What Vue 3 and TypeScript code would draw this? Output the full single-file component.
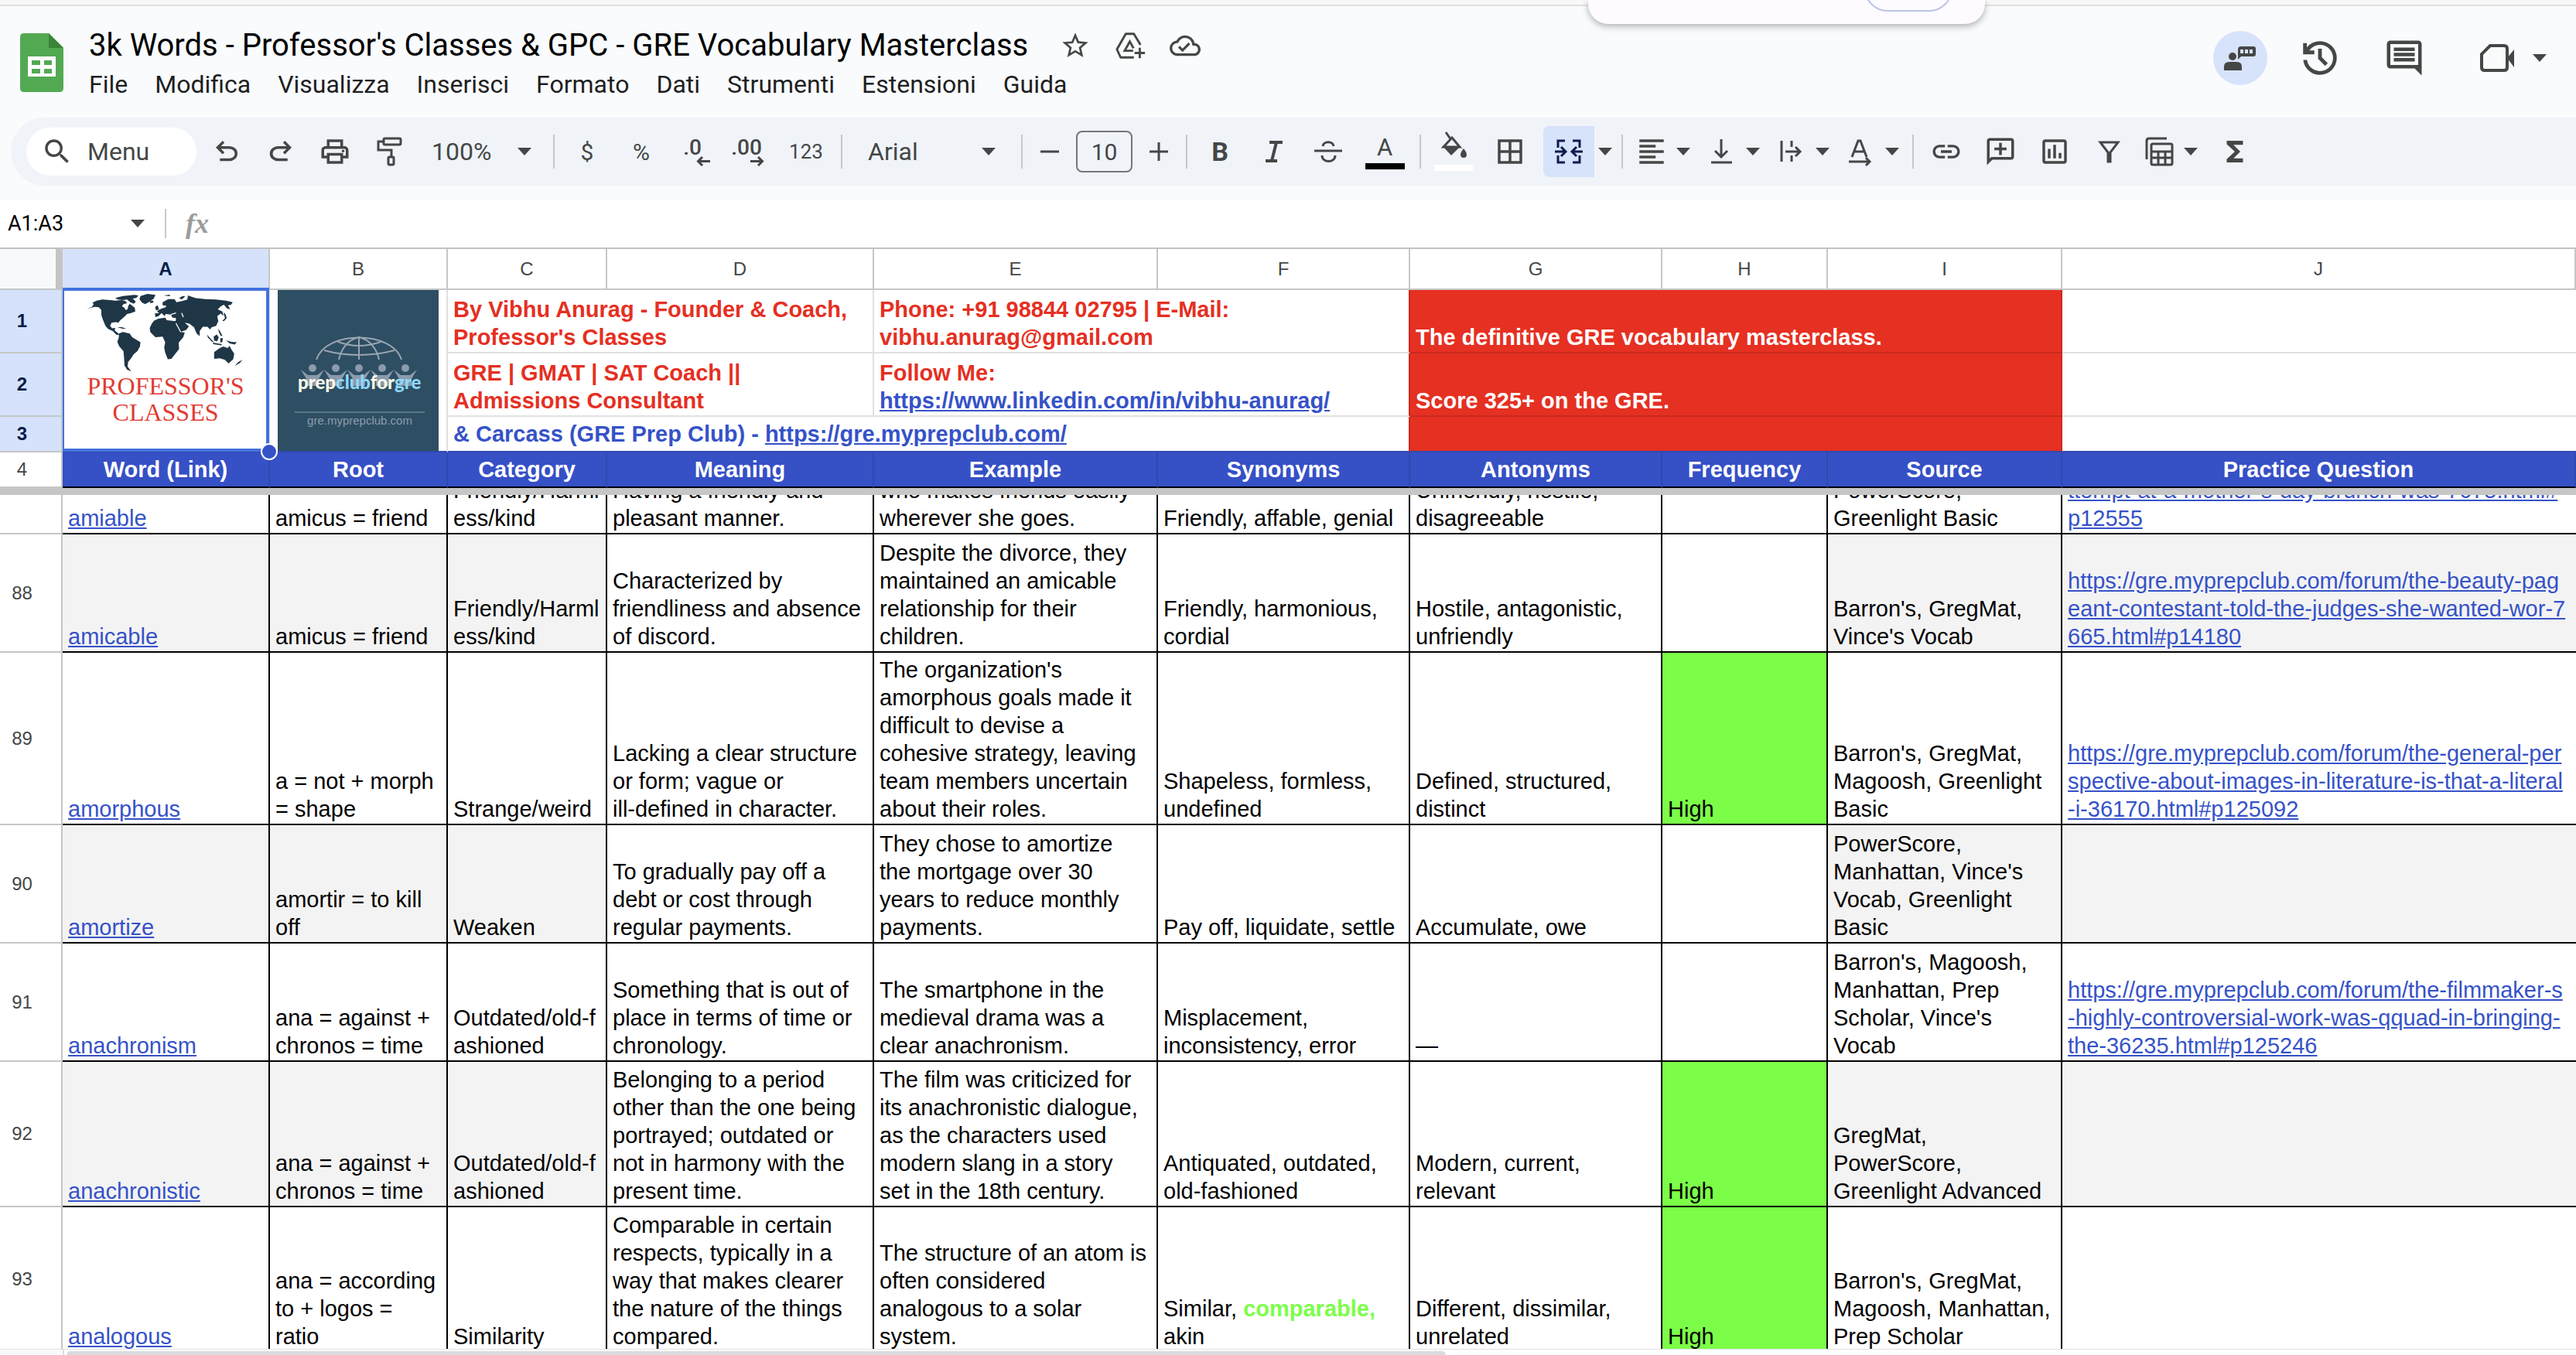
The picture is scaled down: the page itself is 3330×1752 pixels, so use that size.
<script setup lang="ts">
import { ref } from 'vue'

type Part = { text: string; href?: string; hit?: boolean }
type Row = { n: string; height: number; high: boolean; cells: Part[][] }

const menus = ['File', 'Modifica', 'Visualizza', 'Inserisci', 'Formato', 'Dati', 'Strumenti', 'Estensioni', 'Guida']
const letters = ['A', 'B', 'C', 'D', 'E', 'F', 'G', 'H', 'I', 'J']
const titles = ['Word (Link)', 'Root', 'Category', 'Meaning', 'Example', 'Synonyms', 'Antonyms', 'Frequency', 'Source', 'Practice Question']
const shadedColumns = [0, 1, 2, 8, 9]

const zoom = ref('100%')
const font = ref('Arial')
const size = ref('10')
const range = ref('A1:A3')
const formula = ref('')
const query = ref('')

const forum = 'https://gre.myprepclub.com/forum/'

function row(n: string, height: number, word: string, texts: string[], frequency: string, source: string, question: string, hit = ''): Row {
  const plain = texts.map((text): Part[] => {
    if (!hit || !text.includes(hit)) return [{ text }]
    const [before, after] = text.split(hit)
    return [{ text: before }, { text: hit, hit: true }, { text: after }]
  })
  return {
    n,
    height,
    high: frequency !== '',
    cells: [
      [{ text: word, href: '#' + word }],
      ...plain,
      [{ text: frequency }],
      [{ text: source }],
      question ? [{ text: question, href: forum }] : [],
    ],
  }
}

const rows: Row[] = [
  row('', 51, 'amiable', ['amicus = friend', 'Friendly/Harml\ness/kind', 'Having a friendly and\npleasant manner.', 'who makes friends easily\nwherever she goes.', 'Friendly, affable, genial', 'Unfriendly, hostile,\ndisagreeable'], '', 'PowerScore,\nGreenlight Basic', 'ttempt-at-a-mother-s-day-brunch-was-7675.html#\np12555'),
  row('88', 153, 'amicable', ['amicus = friend', 'Friendly/Harml\ness/kind', 'Characterized by\nfriendliness and absence\nof discord.', 'Despite the divorce, they\nmaintained an amicable\nrelationship for their\nchildren.', 'Friendly, harmonious,\ncordial', 'Hostile, antagonistic,\nunfriendly'], '', "Barron's, GregMat,\nVince's Vocab", 'https://gre.myprepclub.com/forum/the-beauty-pag\neant-contestant-told-the-judges-she-wanted-wor-7\n665.html#p14180'),
  row('89', 223, 'amorphous', ['a = not + morph\n= shape', 'Strange/weird', 'Lacking a clear structure\nor form; vague or\nill-defined in character.', "The organization's\namorphous goals made it\ndifficult to devise a\ncohesive strategy, leaving\nteam members uncertain\nabout their roles.", 'Shapeless, formless,\nundefined', 'Defined, structured,\ndistinct'], 'High', "Barron's, GregMat,\nMagoosh, Greenlight\nBasic", 'https://gre.myprepclub.com/forum/the-general-per\nspective-about-images-in-literature-is-that-a-literal\n-i-36170.html#p125092'),
  row('90', 153, 'amortize', ['amortir = to kill\noff', 'Weaken', 'To gradually pay off a\ndebt or cost through\nregular payments.', 'They chose to amortize\nthe mortgage over 30\nyears to reduce monthly\npayments.', 'Pay off, liquidate, settle', 'Accumulate, owe'], '', "PowerScore,\nManhattan, Vince's\nVocab, Greenlight\nBasic", ''),
  row('91', 153, 'anachronism', ['ana = against +\nchronos = time', 'Outdated/old-f\nashioned', 'Something that is out of\nplace in terms of time or\nchronology.', 'The smartphone in the\nmedieval drama was a\nclear anachronism.', 'Misplacement,\ninconsistency, error', '—'], '', "Barron's, Magoosh,\nManhattan, Prep\nScholar, Vince's\nVocab", 'https://gre.myprepclub.com/forum/the-filmmaker-s\n-highly-controversial-work-was-qquad-in-bringing-\nthe-36235.html#p125246'),
  row('92', 188, 'anachronistic', ['ana = against +\nchronos = time', 'Outdated/old-f\nashioned', 'Belonging to a period\nother than the one being\nportrayed; outdated or\nnot in harmony with the\npresent time.', 'The film was criticized for\nits anachronistic dialogue,\nas the characters used\nmodern slang in a story\nset in the 18th century.', 'Antiquated, outdated,\nold-fashioned', 'Modern, current,\nrelevant'], 'High', 'GregMat,\nPowerScore,\nGreenlight Advanced', ''),
  row('93', 188, 'analogous', ['ana = according\nto + logos =\nratio', 'Similarity', 'Comparable in certain\nrespects, typically in a\nway that makes clearer\nthe nature of the things\ncompared.', 'The structure of an atom is\noften considered\nanalogous to a solar\nsystem.', 'Similar, comparable,\nakin', 'Different, dissimilar,\nunrelated'], 'High', "Barron's, GregMat,\nMagoosh, Manhattan,\nPrep Scholar", '', 'comparable,'),
]
</script>

<template>
  <div class="app">
    <svg class="defs" aria-hidden="true">
      <symbol id="search" viewBox="0 0 24 24"><path d="M15.5 14h-.79l-.28-.27A6.471 6.471 0 0 0 16 9.5 6.5 6.5 0 1 0 9.5 16c1.61 0 3.09-.59 4.23-1.57l.27.28v.79l5 4.99L20.49 19l-4.99-5zm-6 0C7.01 14 5 11.99 5 9.5S7.01 5 9.5 5 14 7.01 14 9.5 11.99 14 9.5 14z" /></symbol>
      <symbol id="undo" viewBox="0 -960 960 960"><path d="M280-200v-80h284q63 0 109.5-40T720-420q0-60-46.5-100T564-560H312l104 104-56 56-200-200 200-200 56 56-104 104h252q97 0 169.5 63T800-420q0 94-72.5 157T564-200H280Z" /></symbol>
      <symbol id="redo" viewBox="0 -960 960 960"><path d="M396-200q-97 0-169.5-63T154-420q0-94 72.5-157T396-640h252L544-744l56-56 200 200-200 200-56-56 104-104H396q-63 0-109.5 40T240-420q0 60 46.5 100T396-280h284v80H396Z" /></symbol>
      <symbol id="print" viewBox="0 0 24 24"><path d="M19 8h-1V3H6v5H5c-1.66 0-3 1.34-3 3v6h4v4h12v-4h4v-6c0-1.66-1.34-3-3-3zM8 5h8v3H8V5zm8 14H8v-4h8v4zm2-4v-2H6v2H4v-4c0-.55.45-1 1-1h14c.55 0 1 .45 1 1v4h-2z" /><circle cx="18" cy="11.5" r="1" /></symbol>
      <symbol id="paint" viewBox="0 0 42 42"><g class="stroke"><rect x="14" y="4" width="22" height="8" rx="1.5" /><path d="M14 8H7v11h17v9" /><rect x="20" y="28" width="7" height="10" rx="1.5" /></g></symbol>
      <symbol id="star" viewBox="0 0 24 24"><path d="M22 9.24l-7.19-.62L12 2 9.19 8.63 2 9.24l5.46 4.73L5.82 21 12 17.27 18.18 21l-1.63-7.03L22 9.24zM12 15.4l-3.76 2.27 1-4.28-3.32-2.88 4.38-.38L12 6.1l1.71 4.04 4.38.38-3.32 2.88 1 4.28L12 15.4z" /></symbol>
      <symbol id="drive" viewBox="0 0 42 42"><g class="stroke"><path d="M35 20L26 5H15L3 26l5 11h18" stroke-linejoin="round" /><path d="M25 28H13.500l7-12.500 5 9" /><path d="M34 24v14M27 31h14" /></g></symbol>
      <symbol id="cloud" viewBox="0 0 24 24"><path d="M19.35 10.04A7.49 7.49 0 0 0 12 4C9.11 4 6.6 5.64 5.35 8.04A5.994 5.994 0 0 0 0 14c0 3.310 2.690 6 6 6h13c2.760 0 5-2.240 5-5 0-2.640-2.050-4.780-4.650-4.960zM19 18H6c-2.210 0-4-1.790-4-4 0-2.050 1.530-3.760 3.560-3.970l1.070-.110.500-.950A5.469 5.469 0 0 1 12 6c2.620 0 4.880 1.860 5.390 4.430l.300 1.500 1.530.110A2.980 2.980 0 0 1 22 15c0 1.650-1.350 3-3 3zm-9-3.820l-2.090-2.090L6.500 13.500 10 17l6.010-6.010-1.410-1.410z" /></symbol>
      <symbol id="people" viewBox="0 0 70 70"><circle cx="25" cy="33" r="5" /><path d="M14 51v-5q0-6 7-6h9q7 0 7 6v5z" /><path d="M36 20h16q3 0 3 3v7q0 3-3 3H36l-4 4V24q0-4 4-4zm-1 4v5h4v-5zm6 0v5h4v-5zm6 0v5h4v-5z" /></symbol>
      <symbol id="history" viewBox="0 -960 960 960"><path d="M480-120q-138 0-240.500-91.500T122-440h82q14 104 92.500 172T480-200q117 0 198.500-81.500T760-480q0-117-81.500-198.500T480-760q-69 0-129 32t-101 88h110v80H120v-240h80v94q51-64 124.500-99T480-840q75 0 140.500 28.500t114 77q48.500 48.500 77 114T840-480q0 75-28.500 140.500t-77 114q-48.500 48.500-114 77T480-120Zm112-192L440-464v-216h80v184l128 128-56 56Z" /></symbol>
      <symbol id="comments" viewBox="0 0 24 24"><path d="M20 2H4c-1.100 0-2 .900-2 2v12c0 1.100.900 2 2 2h14l4 4V4c0-1.100-.900-2-2-2zm0 14H4V4h16v12zM6 12h12v2H6zm0-3h12v2H6zm0-3h12v2H6z" /></symbol>
      <symbol id="camera" viewBox="0 0 44 44"><path class="stroke thick" d="M13 6h18q4 0 4 4v24q0 4-4 4H6q-4 0-4-4V17z" /><path d="M35 22l9-11v23z" /></symbol>
      <symbol id="italic" viewBox="0 0 42 42"><path class="stroke thick" d="M15 9h17M10 33h15M24 9l-6 24" /></symbol>
      <symbol id="strike" viewBox="0 0 42 42"><g class="stroke"><path d="M3 20h36M14 14c1-7 13-7 14 0M13 26c0 10 17 10 17 0" /></g></symbol>
      <symbol id="bucket" viewBox="0 0 42 42"><path class="stroke" d="M11 2l7 10M19 9l10 12H8z" /><path d="M7 20h23L18 32zM34 23q4 5 4 8a4 4 0 0 1-8 0q0-3 4-8z" /></symbol>
      <symbol id="borders" viewBox="0 0 24 24"><path d="M3 3v18h18V3H3zm8 16H5v-6h6v6zm0-8H5V5h6v6zm8 8h-6v-6h6v6zm0-8h-6V5h6v6z" /></symbol>
      <symbol id="merge" viewBox="0 0 42 42"><g class="stroke"><path d="M16 7H7v9M16 35H7v-9M26 7h9v9M26 35h9v-9M3 21h13M11 15l6 6-6 6M39 21H26M31 15l-6 6 6 6" /></g></symbol>
      <symbol id="align" viewBox="0 0 24 24"><path d="M15 15H3v2h12v-2zm0-8H3v2h12V7zM3 13h18v-2H3v2zm0 8h18v-2H3v2zM3 3v2h18V3H3z" /></symbol>
      <symbol id="bottom" viewBox="0 0 42 42"><path class="stroke" d="M21 5v22M13 20l8 8 8-8M8 35h27" /></symbol>
      <symbol id="wrap" viewBox="0 0 42 42"><path class="stroke" d="M9 7v27M22 7v8M22 26v8M14 21h19M27 15l6 6-6 6" /></symbol>
      <symbol id="rotate" viewBox="0 0 42 42"><path class="stroke" d="M10 28L18 7h3l8 21M13 21h13M6 34h26M28 29l5 5-5 5" /></symbol>
      <symbol id="link" viewBox="0 0 24 24"><path d="M3.900 12c0-1.710 1.390-3.100 3.100-3.100h4V7H7c-2.760 0-5 2.240-5 5s2.240 5 5 5h4v-1.900H7c-1.710 0-3.100-1.390-3.100-3.100zM8 13h8v-2H8v2zm9-6h-4v1.900h4c1.710 0 3.100 1.390 3.100 3.100s-1.390 3.100-3.100 3.100h-4V17h4c2.760 0 5-2.240 5-5s-2.240-5-5-5z" /></symbol>
      <symbol id="comment" viewBox="0 0 24 24"><path d="M4 2h16c1.100 0 2 .900 2 2v12c0 1.100-.900 2-2 2H6l-4 4V4c0-1.100.900-2 2-2zm0 2v13.200L5.200 16H20V4H4zm7 1.500h2V9h3.500v2H13v3.500h-2V11H7.500V9H11z" /></symbol>
      <symbol id="chart" viewBox="0 0 24 24"><path d="M19 3H5c-1.100 0-2 .900-2 2v14c0 1.100.900 2 2 2h14c1.100 0 2-.900 2-2V5c0-1.100-.900-2-2-2zm0 16H5V5h14v14zM7 10h2v7H7zm4-3h2v10h-2zm4 6h2v4h-2z" /></symbol>
      <symbol id="filter" viewBox="0 0 42 42"><path class="stroke" d="M10 9h23L23 22v12h-3V22z" /></symbol>
      <symbol id="tables" viewBox="0 0 42 42"><g class="stroke"><path d="M5 31V7q0-3 3-3h23" /><rect x="11" y="11" width="27" height="27" rx="2" /><path d="M11 21h27M11 29h27M20 21v17M29 21v17" /></g></symbol>
      <symbol id="sigma" viewBox="0 0 24 24"><path d="M18 4H6v2.500l6 5.500-6 5.500V20h12v-3h-7l5-5-5-5h7z" /></symbol>
      <symbol id="caret" viewBox="0 0 18 10"><path d="M0 0h18L9 10z" /></symbol>
    </svg>

    <div class="top-strip"></div>
    <div class="popup"><span class="popup-pill"></span></div>

    <header class="header">
      <svg class="logo" viewBox="0 0 56 76" aria-label="Fogli">
        <path d="M5 0h32l19 19v52q0 5-5 5H5q-5 0-5-5V5q0-5 5-5z" fill="#52a952" />
        <path d="M37 0l19 19H37z" fill="#3a8438" />
        <path d="M10 30h36v26H10zm5 5v6h11v-6zm16 0v6h10v-6zM15 46v6h11v-6zm16 0v6h10v-6z" fill="#fff" />
      </svg>
      <div class="heading">
        <div class="title-row">
          <h1>3k Words - Professor's Classes &amp; GPC - GRE Vocabulary Masterclass</h1>
          <button aria-label="Speciale"><svg class="mark"><use href="#star" /></svg></button>
          <button aria-label="Aggiungi a Drive"><svg class="mark"><use href="#drive" /></svg></button>
          <button aria-label="Stato"><svg class="mark"><use href="#cloud" /></svg></button>
        </div>
        <nav class="menus">
          <button v-for="m in menus" :key="m">{{ m }}</button>
        </nav>
      </div>
      <div class="actions">
        <button class="people" aria-label="Presenza"><svg><use href="#people" /></svg></button>
        <button aria-label="Cronologia"><svg class="i58"><use href="#history" /></svg></button>
        <button class="talk" aria-label="Commenti"><svg class="i54"><use href="#comments" /></svg></button>
        <button class="meet" aria-label="Meet"><svg class="i44"><use href="#camera" /></svg><svg class="caret"><use href="#caret" /></svg></button>
      </div>
    </header>

    <div class="toolbar-wrap">
      <div class="toolbar" role="toolbar">
        <label class="search"><svg class="icon"><use href="#search" /></svg><input v-model="query" placeholder="Menu" aria-label="Menu" /></label>
        <button v-for="i in ['undo', 'redo', 'print', 'paint']" :key="i" class="tool" :aria-label="i"><svg class="icon"><use :href="'#' + i" /></svg></button>
        <div class="drop zoom"><select v-model="zoom" aria-label="Zoom"><option>100%</option></select><svg class="caret"><use href="#caret" /></svg></div>
        <i class="divider"></i>
        <button class="tool sign">$</button>
        <button class="tool sign">%</button>
        <button class="tool decimals">.0<svg viewBox="0 0 18 13"><path class="stroke" d="M18 6.500H3M8 1L2.500 6.500 8 12" /></svg></button>
        <button class="tool decimals">.00<svg viewBox="0 0 18 13"><path class="stroke" d="M0 6.500h15M10 1l5.500 5.500L10 12" /></svg></button>
        <button class="tool digits">123</button>
        <i class="divider"></i>
        <div class="drop font"><select v-model="font" aria-label="Carattere"><option>Arial</option></select><svg class="caret"><use href="#caret" /></svg></div>
        <i class="divider"></i>
        <button class="tool step" aria-label="Riduci"><svg viewBox="0 0 24 24"><path class="stroke" d="M0 12h24" /></svg></button>
        <input v-model="size" class="size" aria-label="Dimensione carattere" />
        <button class="tool step" aria-label="Aumenta"><svg viewBox="0 0 24 24"><path class="stroke" d="M0 12h24M12 0v24" /></svg></button>
        <i class="divider"></i>
        <button class="tool bold">B</button>
        <button class="tool" aria-label="Corsivo"><svg class="icon"><use href="#italic" /></svg></button>
        <button class="tool" aria-label="Barrato"><svg class="icon"><use href="#strike" /></svg></button>
        <button class="tool wide color">A<span class="bar black"></span></button>
        <i class="divider"></i>
        <button class="tool color" aria-label="Riempimento"><svg class="icon"><use href="#bucket" /></svg><span class="bar white"></span></button>
        <button class="tool wide" aria-label="Bordi"><svg class="icon"><use href="#borders" /></svg></button>
        <button class="tool merge" aria-label="Unisci celle"><svg class="icon"><use href="#merge" /></svg></button>
        <button class="merge-more" aria-label="Tipo di unione"><svg class="caret"><use href="#caret" /></svg></button>
        <i class="divider"></i>
        <button v-for="i in ['align', 'bottom', 'wrap', 'rotate']" :key="i" class="tool split" :aria-label="i"><svg class="icon"><use :href="'#' + i" /></svg><svg class="caret"><use href="#caret" /></svg></button>
        <i class="divider"></i>
        <button v-for="i in ['link', 'comment', 'chart', 'filter']" :key="i" class="tool" :aria-label="i"><svg class="icon"><use :href="'#' + i" /></svg></button>
        <button class="tool split" aria-label="Visualizzazioni"><svg class="icon"><use href="#tables" /></svg><svg class="caret"><use href="#caret" /></svg></button>
        <button class="tool wide" aria-label="Funzioni"><svg class="icon"><use href="#sigma" /></svg></button>
      </div>
    </div>

    <div class="formula-bar">
      <input v-model="range" class="name-box" aria-label="Casella del nome" />
      <svg class="caret"><use href="#caret" /></svg>
      <i class="divider"></i>
      <label for="formula" class="fx">fx</label>
      <input id="formula" v-model="formula" class="formula" />
    </div>

    <main class="sheet">
      <table>
        <colgroup>
          <col class="w-head" /><col class="w-a" /><col class="w-b" /><col class="w-c" /><col class="w-d" /><col class="w-e" />
          <col class="w-f" /><col class="w-g" /><col class="w-h" /><col class="w-i" /><col />
        </colgroup>
        <thead>
          <tr>
            <td class="corner"></td>
            <th v-for="l in letters" :key="l" :class="{ selected: l === 'A' }">{{ l }}</th>
          </tr>
        </thead>
        <tbody>
          <tr class="intro tall">
            <th class="rn selected">1</th>
            <td rowspan="3" class="picked">
              <svg class="art" viewBox="0 0 230 208" aria-label="Professor's Classes">
                <g transform="translate(0 -1) scale(0.333)" fill="#1f3647">
                  <path d="M40 76l20-8 6-10-4-6 16-8 22-4 30 2 20 2 25-2 15 4 6 8-14 4-6 8 10 6 4 8 8-2 2-12 6-10 8 6 12 10 2 14-16 6-16 4-12 12-14 12-8 10-10-2-16 2-6 12 8 10 12-2-2 10 12 10 6 6-10 2-16-16-18-8-10-12-10-24-6-18V80l-10-10-16-2z" />
                  <path d="M150 34l30-8 45-4 15 2-8 10-14 2 12 12-8 8-14-6-12-10-16 2-20-2zM248 26l27-8 31 4-6 14-16 12-18 10-12-6-10-14zM158 147l18 0 18 7-16-1z" />
                  <path d="M164 172l16-6 26 6 10 14 32 20-2 16-10 18-14 12-12 18-10 12-2 18 14 18-16-6-10-16-2-34-2-22-16-18-8-18 6-16z" />
                  <path d="M300 122l18-8 26-4 6 10 34 4 10 22 10 20 16 2-6 18-18 22 2 24-16 20-14 18-14 2-10-26-4-20 4-20-10-22-28 2-20-20-2-16 8-16z" />
                  <path d="M306 108l-2-14 16-2-8-8 16-8 18-6 2-6-14-2v-12l22-12h24l8 12 22-4 20-6 2-16 28 10 40 4 40 2 40 4 26 6-6 10-12 2 8 16-12-4-12-14-12 6-12 12 18 8 4 18-10-10-14 10 4 20-8 18-18 6-6 8-10-10-18 0-12 16v20l-12-10-10-24-18-14-18-4 16 14-10 14-22 8-10-16-10-24 2-14-14-2-6-12-20-2-4 8-12-12-12 12z" />
                  <path d="M305 68l10-6 5 16-12 4zM284 46l14-2v8l-12 2zM566 122l10-10-6-22 8 6 5 16-11 12zM506 176l18 20 10 10-8-2-16-16zM530 207l34 6-2 5-32-5zM532 184l12-8 8 10-6 16-12-2zM580 198l20 6 22 2-8 9-20-5zM558 190h10l-2 14-8 4zM550 152l8 14 8 14-6 2-8-16zM644 274l-10 12-20 12 14-16zM338 24l24-3v6zM398 34l14-8 10 2-14 12z" />
                  <path d="M534 244l22-16 14-6 16 6 8-8 6 12 12 18-4 22-18 16-14-14-20-6-22 2z" />
                  <path d="M386 132l18 34M366 98l20-6M408 92l6 16" fill="none" stroke="#fff" stroke-width="4" />
                </g>
                <text x="115" y="135" class="prof">PROFESSOR'S</text>
                <text x="115" y="169" class="prof">CLASSES</text>
              </svg>
              <span class="selection"></span><span class="handle"></span>
            </td>
            <td rowspan="3" class="club-cell">
              <svg class="club" viewBox="0 0 208 208" aria-label="prepclubforgre">
                <rect width="208" height="208" fill="#2e4e63" />
                <g fill="none" stroke="#98a5b0" stroke-width="2">
                  <path d="M50 90C62 52 148 52 160 90M79 90C82 76 91 64 105 61M131 90C128 76 119 64 105 61M105 61v29M78 67q27 10 55 0M60 78q45 12 91 0" />
                </g>
                <g v-for="n in 5" :key="n" fill="#8b9bab">
                  <circle :cx="15 + n * 30" cy="101" r="5" />
                  <path :d="`M${n * 30} 103l9 7h12l9-7-7 12v9h-16v-9z`" />
                </g>
                <text x="26" y="128" class="club-name"><tspan fill="#fbf9e8">prep</tspan><tspan fill="#8fd8f7">club</tspan><tspan fill="#fbf9e8">for</tspan><tspan fill="#8fd8f7">gre</tspan></text>
                <path d="M22 158h168" stroke="#8ba0ad" />
                <text x="106" y="174" class="club-url">gre.myprepclub.com</text>
              </svg>
            </td>
            <td colspan="2" class="red-text"><div class="cell">By Vibhu Anurag - Founder &amp; Coach,<br />Professor's Classes</div></td>
            <td colspan="2" class="red-text before-red"><div class="cell">Phone: +91 98844 02795 | E-Mail:<br />vibhu.anurag@gmail.com</div></td>
            <td colspan="3" class="banner"><div class="cell">The definitive GRE vocabulary masterclass.</div></td>
            <td></td>
          </tr>
          <tr class="intro tall">
            <th class="rn selected">2</th>
            <td colspan="2" class="red-text"><div class="cell">GRE | GMAT | SAT Coach ||<br />Admissions Consultant</div></td>
            <td colspan="2" class="red-text before-red"><div class="cell">Follow Me:<br /><a href="https://www.linkedin.com/in/vibhu-anurag/">https://www.linkedin.com/in/vibhu-anurag/</a></div></td>
            <td colspan="3" class="banner"><div class="cell">Score 325+ on the GRE.</div></td>
            <td></td>
          </tr>
          <tr class="intro short">
            <th class="rn selected">3</th>
            <td colspan="4" class="blue-text before-red"><div class="cell">&amp; Carcass (GRE Prep Club) - <a href="https://gre.myprepclub.com/">https://gre.myprepclub.com/</a></div></td>
            <td colspan="3" class="banner"></td>
            <td></td>
          </tr>
          <tr class="titles">
            <th class="rn">4</th>
            <th v-for="t in titles" :key="t" scope="col">{{ t }}</th>
          </tr>
          <tr class="freeze"><td colspan="11"></td></tr>
          <tr v-for="(r, ri) in rows" :key="r.n" class="data">
            <th class="rn">{{ r.n }}</th>
            <td v-for="(parts, c) in r.cells" :key="c" :class="{ shaded: ri % 2 === 1 && shadedColumns.includes(c), high: r.high && c === 7 }">
              <div class="cell" :style="{ height: r.height - 2 + 'px' }"><p><template v-for="(p, i) in parts" :key="i"><a v-if="p.href" :href="p.href">{{ p.text }}</a><b v-else-if="p.hit">{{ p.text }}</b><template v-else>{{ p.text }}</template></template></p></div>
            </td>
          </tr>
        </tbody>
      </table>
    </main>
    <footer class="scrollbar"><span class="scroll-corner"></span><span class="track"><span class="thumb"></span></span></footer>
  </div>
</template>

<style>
body {
  margin: 0;
}
</style>

<style scoped>
.app {
  position: relative;
  display: flex;
  flex-direction: column;
  height: 100vh;
  overflow: hidden;
  background: #fff;
  color: #000;
  font-family: Roboto, sans-serif;
}
* {
  box-sizing: border-box;
}
.defs {
  position: absolute;
  width: 0;
  height: 0;
}
svg {
  display: block;
  flex: none;
  fill: currentColor;
  fill-rule: evenodd;
}
.stroke {
  fill: none;
  stroke: currentColor;
  stroke-width: 3px;
}
.thick {
  stroke-width: 4px;
}
button,
select,
input {
  margin: 0;
  padding: 0;
  border: 0;
  background: none;
  color: inherit;
  font: inherit;
  outline: none;
}
a {
  color: #3552c8;
  text-decoration: underline;
}
.top-strip {
  flex: none;
  height: 8px;
  background: #faf7f9;
  border-bottom: 2px solid #e2e0e2;
}
.popup {
  position: absolute;
  z-index: 2;
  top: 0;
  left: 2053px;
  width: 513px;
  height: 31px;
  overflow: visible;
  background: #fdfbff;
  border-radius: 0 0 26px 26px;
  box-shadow: 0 3px 8px rgba(60, 64, 67, 0.4);
}
.popup-pill {
  position: absolute;
  right: 42px;
  bottom: 16px;
  width: 114px;
  height: 60px;
  border: 2px solid #bcc4e6;
  border-radius: 30px;
  clip-path: inset(45px 0 0 0);
}
.header {
  display: flex;
  flex: none;
  align-items: flex-start;
  height: 144px;
  padding: 26px 38px 0 26px;
  background: #f9fbfd;
  color: #444746;
}
.logo {
  width: 56px;
  height: 76px;
  margin: 9px 33px 0 0;
}
.title-row {
  display: flex;
  align-items: center;
  gap: 31px;
  height: 50px;
  margin-bottom: 5px;
}
h1 {
  margin: 0 10px 0 0;
  color: #000;
  font-size: 40px;
  font-weight: 400;
  line-height: 48px;
  white-space: nowrap;
}
.mark {
  width: 40px;
  height: 40px;
}
.menus {
  display: flex;
  gap: 35px;
  color: #1f1f1f;
  font-size: 32px;
  line-height: 40px;
}
.actions {
  display: flex;
  align-items: center;
  gap: 39px;
  height: 82px;
  margin-left: auto;
}
.people {
  border-radius: 50%;
  background: #d7e2fb;
}
.people svg {
  width: 70px;
  height: 70px;
}
.i58 {
  width: 58px;
  height: 58px;
}
.i54 {
  width: 54px;
  height: 54px;
}
.i44 {
  width: 44px;
  height: 44px;
}
.talk {
  margin-left: 14px;
}
.meet {
  display: flex;
  align-items: center;
  gap: 24px;
  margin-left: 32px;
}
.caret {
  width: 18px;
  height: 10px;
}
.toolbar-wrap {
  flex: none;
  padding: 0 0 18px 14px;
  background: #f9fbfd;
}
.toolbar {
  display: flex;
  align-items: center;
  height: 88px;
  padding-left: 20px;
  border-radius: 44px 0 0 44px;
  background: #f0f4f9;
  color: #444746;
  font-size: 32px;
}
.icon {
  width: 42px;
  height: 42px;
}
.search {
  display: flex;
  align-items: center;
  gap: 18px;
  width: 220px;
  height: 62px;
  margin-right: 4px;
  padding-left: 19px;
  border-radius: 31px;
  background: #fff;
}
.search input {
  width: 120px;
}
.search input::placeholder {
  color: #444746;
  opacity: 1;
}
.tool {
  display: flex;
  flex: none;
  align-items: center;
  justify-content: center;
  width: 70px;
  height: 66px;
}
.divider {
  flex: none;
  width: 2px;
  height: 44px;
  margin: 0 7px;
  background: #c7c7c7;
}
.drop {
  position: relative;
  flex: none;
}
.drop select {
  width: 100%;
  height: 60px;
  appearance: none;
}
.drop .caret {
  position: absolute;
  top: 25px;
  pointer-events: none;
}
.zoom {
  width: 170px;
}
.zoom select {
  padding-left: 20px;
}
.zoom .caret {
  right: 21px;
}
.font {
  width: 217px;
}
.font select {
  padding-left: 26px;
}
.font .caret {
  right: 26px;
}
.sign {
  font-size: 30px;
}
.decimals {
  position: relative;
  padding-bottom: 12px;
  padding-right: 8px;
  font-size: 28px;
  font-weight: 500;
}
.decimals svg {
  position: absolute;
  right: 16px;
  bottom: 14px;
  width: 18px;
  height: 13px;
}
.digits {
  width: 76px;
  font-size: 26px;
}
.step {
  width: 56px;
}
.step svg {
  width: 24px;
  height: 24px;
}
.size {
  width: 73px;
  height: 54px;
  margin: 0 6px;
  border: 2px solid #747775;
  border-radius: 8px;
  font-size: 30px;
  text-align: center;
}
.bold {
  font-size: 34px;
  font-weight: 700;
}
.wide {
  width: 76px;
}
.color {
  flex-direction: column;
  gap: 2px;
  padding-bottom: 2px;
  font-size: 31px;
}
.bar {
  width: 51px;
  height: 8px;
}
.black {
  background: #000;
}
.white {
  background: #fff;
}
.merge {
  width: 66px;
  margin-left: 5px;
  border-radius: 8px 0 0 8px;
  background: #d7e2fb;
  color: #0b1d4c;
}
.merge-more {
  width: 28px;
  padding-left: 5px;
}
.split {
  justify-content: flex-start;
  gap: 11px;
  width: 90px;
  padding-left: 9px;
}
.formula-bar {
  display: flex;
  flex: none;
  align-items: center;
  height: 64px;
  border-bottom: 2px solid #c1c3c1;
  color: #444746;
}
.name-box {
  width: 160px;
  margin-right: 9px;
  padding-left: 10px;
  color: #000;
  font-size: 27px;
}
.formula-bar .divider {
  height: 38px;
  margin: 0 25px 0 26px;
}
.fx {
  color: #9a9c9a;
  font-family: 'Liberation Serif', serif;
  font-size: 36px;
  font-style: italic;
  font-weight: 700;
}
.formula {
  flex: 1;
  margin-left: 20px;
}
.sheet {
  flex: 1;
  min-height: 0;
  overflow: hidden;
}
table {
  width: 100%;
  border-spacing: 0;
  table-layout: fixed;
  font-family: 'Liberation Sans', Arial, sans-serif;
  font-size: 29px;
  line-height: 36px;
}
.w-head {
  width: 81px;
}
.w-a {
  width: 268px;
}
.w-b {
  width: 230px;
}
.w-c {
  width: 206px;
}
.w-d {
  width: 345px;
}
.w-e {
  width: 367px;
}
.w-f,
.w-g {
  width: 326px;
}
.w-h {
  width: 214px;
}
.w-i {
  width: 303px;
}
th,
td {
  padding: 0;
  border: solid #e1e1e1;
  border-width: 0 2px 2px 0;
}
thead th,
.corner,
.rn {
  height: 53px;
  border-color: #c4c7c5;
  color: #444746;
  font-size: 24px;
  font-weight: 400;
}
.corner {
  border-right: 9px solid #c4c4c4;
  background: #f8f9fa;
}
.rn {
  height: auto;
  padding-right: 22px;
}
.selected,
thead .selected {
  background: #d6e2fb;
  color: #041e49;
  font-weight: 700;
}
.tall {
  height: 82px;
}
.short {
  height: 46px;
}
.cell {
  padding: 0 0 1px 7px;
  overflow: hidden;
  white-space: pre;
}
.intro td {
  vertical-align: bottom;
  font-weight: 700;
}
.intro td:last-child {
  border-right: 0;
}
.intro.short td {
  vertical-align: middle;
  border-bottom-color: #3049b0;
}
.red-text {
  color: #e52f22;
}
.blue-text {
  color: #3552c8;
}
.intro .before-red {
  border-right-color: #c9291e;
}
.intro .banner {
  border-color: #c9291e;
  background: #e53022;
  color: #fff;
}
.picked {
  position: relative;
}
.intro .picked,
.intro .club-cell {
  vertical-align: top;
  border-bottom-color: #3049b0;
}
.art {
  width: 230px;
  height: 208px;
  margin: 0 auto;
}
.prof {
  fill: #e23a32;
  font-family: 'Liberation Serif', serif;
  font-size: 32px;
  font-weight: 400;
  text-anchor: middle;
}
.club {
  width: 208px;
  height: 208px;
  margin: 0 auto;
}
.club-name {
  font-family: Lato, sans-serif;
  font-size: 24px;
  font-weight: 900;
}
.club-url {
  fill: #8b9dab;
  font-size: 15px;
  font-weight: 400;
  text-anchor: middle;
}
.selection {
  position: absolute;
  inset: -3px -1px -1px 0;
  border: 4px solid #4471e0;
  border-left-width: 2px;
}
.handle {
  position: absolute;
  right: -12px;
  bottom: -12px;
  z-index: 1;
  width: 22px;
  height: 22px;
  border: 2px solid #fff;
  border-radius: 50%;
  background: #3552c8;
}
.titles {
  height: 46px;
}
.titles th:not(.rn) {
  border-color: #3049b0;
  border-bottom-color: #000;
  background: #3650c6;
  color: #fff;
}
.titles .rn {
  border-bottom-color: #c6c6c6;
}
.freeze td {
  height: 9px;
  border: 0;
  background: #c6c6c6;
}
.data td {
  border-color: #000;
  vertical-align: bottom;
}
.data .cell {
  display: flex;
  align-items: flex-end;
}
.data p {
  margin: 0;
}
.data b {
  color: #7cfe49;
}
.data .shaded {
  background: #f3f3f3;
}
.data .high {
  background: #7cfe49;
}
.data td:last-child {
  border-right: 0;
}
.scrollbar {
  display: flex;
  flex: none;
  height: 8px;
  border-top: 1px solid #e0e0e0;
}
.scroll-corner {
  width: 83px;
  border-right: 2px solid #dcdcdc;
  background: #f8f9fa;
}
.track {
  flex: 1;
  padding: 2px 3px 0;
}
.thumb {
  display: block;
  width: 55%;
  height: 5px;
  border-radius: 8px 8px 0 0;
  background: #dadce0;
}
</style>
